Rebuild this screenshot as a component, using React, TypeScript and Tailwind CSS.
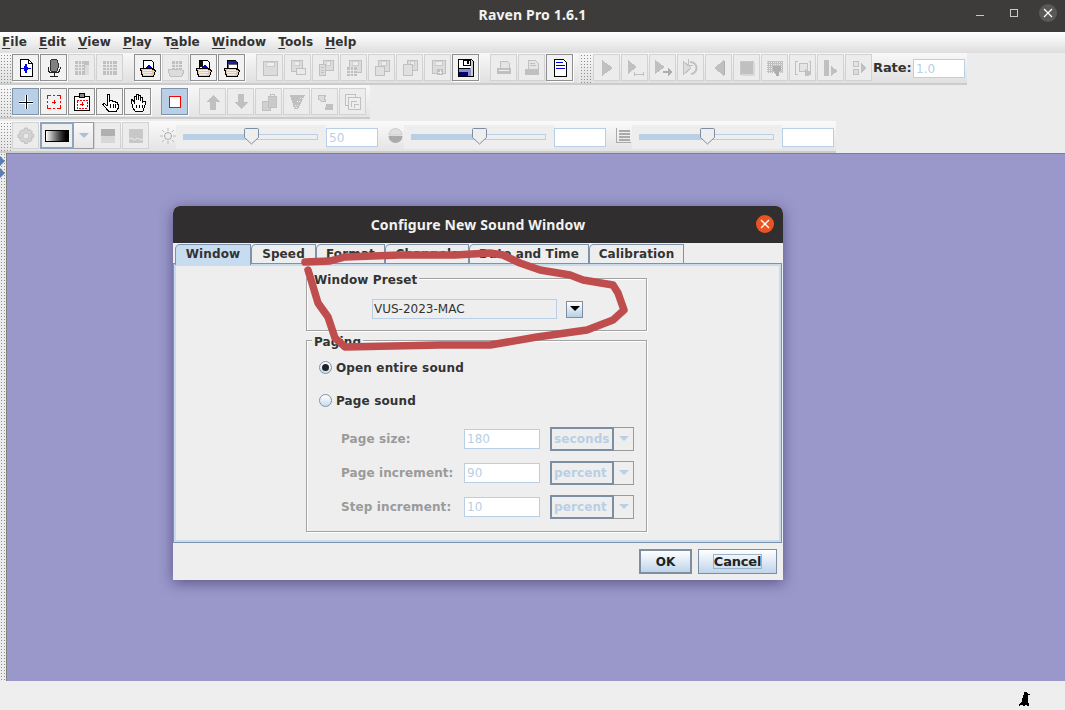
import React from "react";

const F = { fontFamily: '"DejaVu Sans", sans-serif' };
const G = "#c0c0c0";
const L = "#dcdcdc";

const Ic = ({ children, s = 20 }: { children: React.ReactNode; s?: number }) => (
  <svg width={s} height={s} viewBox="0 0 20 20" shapeRendering="crispEdges" className="block">
    {children}
  </svg>
);

const Floppy = ({ x = 4, y = 3, s = 12 }: { x?: number; y?: number; s?: number }) => (
  <g>
    <rect x={x + 0.5} y={y + 0.5} width={s} height={s} fill={L} stroke={G} />
    <rect x={x + 3} y={y + 1} width={s - 6} height={4} fill="#eee" stroke={G} strokeWidth="0.6" />
  </g>
);

const OpenDoc = ({ top, tri = true }: { top: string; tri?: boolean }) => (
  <g>
    <path d="M5.5 2.5h8l2 2v8h-10z" fill="#fff" stroke="#000" />
    {top === "black" && <rect x="6" y="3" width="3" height="6" fill="#111" />}
    {top === "blue" && <rect x="6" y="3" width="9" height="3" fill="#20209a" />}
    {tri && <path d="M7 11l4-5 4 5z" fill="#0000d8" />}
    {top === "blue" && <rect x="6" y="6" width="9" height="5" fill="#fff" stroke="#000" strokeWidth="0.6" />}
    <path d="M2.5 10.5h11l4 2-2 6h-11z" fill="#e8c8a8" stroke="#000" />
    <path d="M5 12h9M5 14h9M5 16h8" stroke="#f8efe4" />
  </g>
);

const icons: Record<string, React.ReactNode> = {
  sound: (
    <Ic>
      <path d="M4.5 1.500h8l4 4v13h-12z" fill="#fff" stroke="#000" />
      <path d="M12.500 1.500v4h4" fill="none" stroke="#000" />
      <path d="M5 10h3l1-3 1-2 1 2 1 3h3v1h-3l-1 3-1 2-1-2-1-3H5z" fill="#0000e0" />
    </Ic>
  ),
  mic: (
    <Ic>
      <rect x="6" y="1" width="8" height="13" rx="4" fill="#808080" stroke="#333" />
      <path d="M4 9v2c0 3 3 4 6 4s6-1 6-4V9M10 15v3M6 18.500h8" fill="none" stroke="#222" />
    </Ic>
  ),
  table: (
    <Ic>
      <rect x="3" y="3" width="14" height="14" fill={G} />
      <path d="M3 6.500h9M3 9.500h9M3 12.500h9M6.500 3v14M9.500 3v14" stroke="#e6e6e6" />
      <rect x="13" y="7" width="4" height="10" fill={L} />
    </Ic>
  ),
  grid: (
    <Ic>
      <rect x="3" y="3" width="14" height="14" fill={G} />
      <path d="M3 6.500h14M3 9.500h14M3 12.500h14M6.500 3v14M9.500 3v14M12.500 3v14" stroke="#e6e6e6" />
    </Ic>
  ),
  open1: <Ic><OpenDoc top="" /></Ic>,
  open2: <Ic><OpenDoc top="black" /></Ic>,
  open3: <Ic><OpenDoc top="blue" /></Ic>,
  openD: (
    <Ic>
      <rect x="6" y="3" width="10" height="9" fill={G} />
      <path d="M6 6.500h10M6 9.500h10M9.500 3v9M12.500 3v9" stroke="#e6e6e6" />
      <path d="M2 11h12l4 2-2 5H4z" fill={L} stroke={G} />
    </Ic>
  ),
  fl1: <Ic><Floppy x={3} y={3} s={14} /></Ic>,
  fl2: (
    <Ic>
      <Floppy x={3} y={2} s={11} />
      <rect x="8.500" y="10.500" width="9" height="6" fill="#eaeaea" stroke={G} />
    </Ic>
  ),
  fl3: (
    <Ic>
      <Floppy x={7} y={2} s={10} />
      <path d="M3.500 6.500h6v11h-6z" fill={L} stroke={G} />
      <path d="M5 9.500h3M5 12h3M5 14.500h3" stroke={G} />
    </Ic>
  ),
  fl4: (
    <Ic>
      <Floppy x={5} y={2} s={12} />
      <rect x="3" y="9" width="10" height="9" fill={G} />
      <path d="M3 12h10M3 15h10M6.500 9v9M9.500 9v9" stroke="#e6e6e6" />
    </Ic>
  ),
  fl5: (
    <Ic>
      <Floppy x={6} y={2} s={11} />
      <rect x="3.500" y="8.500" width="9" height="9" fill="#e0e0e0" stroke={G} />
    </Ic>
  ),
  fl6: (
    <Ic>
      <Floppy x={7} y={2} s={10} />
      <rect x="3.500" y="6.500" width="9" height="11" fill="#e0e0e0" stroke={G} />
    </Ic>
  ),
  fl7: (
    <Ic>
      <Floppy x={4} y={2} s={13} />
      <path d="M9 11h6v6H9z" fill={G} />
      <path d="M12 12v4M10 14h4" stroke="#eee" />
    </Ic>
  ),
  save: (
    <Ic>
      <path d="M2.500 1.500h13l2 2v15h-15z" fill="#fff" stroke="#000" />
      <rect x="3" y="10" width="12" height="8" fill="#8c8cc8" />
      <rect x="3" y="10" width="11" height="1" fill="#000" />
      <rect x="7" y="2" width="7" height="5" fill="#fff" stroke="#000" />
      <rect x="11" y="3" width="2" height="3" fill="#000" />
      <rect x="3" y="14" width="9" height="4" fill="#00007a" />
      <rect x="15" y="3" width="2" height="15" fill="#ccc" />
    </Ic>
  ),
  print: (
    <Ic>
      <path d="M6 3h7l2 2v5H6z" fill="#e4e4e4" stroke={G} />
      <rect x="3" y="10" width="14" height="6" fill={G} />
      <rect x="5" y="12" width="10" height="1" fill="#eee" />
    </Ic>
  ),
  printF: (
    <Ic>
      <path d="M6 2h7l3 3v6H6z" fill="#e4e4e4" stroke={G} />
      <path d="M8 5h5M8 7h6" stroke={G} />
      <rect x="3" y="11" width="14" height="6" fill={G} />
    </Ic>
  ),
  doc: (
    <Ic>
      <path d="M4.500 1.500h9l3 3v14h-12z" fill="#fff" stroke="#000" />
      <path d="M6 4h7M6 7h9M6 10h9" stroke="#0000e0" strokeWidth="1" />
    </Ic>
  ),
  play: (
    <Ic>
      <path d="M5 2l11 8-11 8z" fill={G} />
    </Ic>
  ),
  playB: (
    <Ic>
      <path d="M3 2l9 7-9 7z" fill={G} />
      <path d="M9.500 14v4M18.500 14v4M10 16h8" stroke={G} />
    </Ic>
  ),
  playA: (
    <Ic>
      <path d="M2 2l10 7-10 7z" fill={G} />
      <path d="M10 13h5v-3l4 4-4 4v-3h-5z" fill="#aeaeae" />
    </Ic>
  ),
  replay: (
    <Ic>
      <path d="M2 3l8 7-8 7z" fill={L} stroke={G} />
      <path d="M9 4a6 6 0 1 1 1 12" fill="none" stroke={G} strokeWidth="2" shapeRendering="auto" />
      <path d="M7 1v6h5" fill="none" stroke={G} />
    </Ic>
  ),
  rev: (
    <Ic>
      <path d="M15 2v16L5 10z" fill={G} />
      <rect x="15" y="3" width="1" height="14" fill="#aeaeae" />
    </Ic>
  ),
  stop: (
    <Ic>
      <rect x="3" y="3" width="13" height="13" fill={G} stroke="#c8c8c8" />
      <rect x="16" y="5" width="2" height="13" fill="#d8d8d8" />
      <rect x="5" y="16" width="13" height="2" fill="#d8d8d8" />
    </Ic>
  ),
  sel: (
    <Ic>
      <rect x="2" y="3" width="16" height="12" fill={G} />
      <path d="M2 4h16M2 6h16M2 8h16M2 10h16M2 12h16M2 14h16" stroke="#e8e8e8" strokeDasharray="1 1" />
      <path d="M8 8h8v5h-2v5h-3l-1-5H8z" fill="#aeaeae" />
    </Ic>
  ),
  selB: (
    <Ic>
      <path d="M4.500 3.500h-2v13h2M15.500 3.500h2v13h-2" fill="none" stroke={G} />
      <rect x="6.500" y="5.500" width="8" height="8" fill="#e4e4e4" stroke={G} strokeWidth="1.500" />
      <path d="M12 11l6 3-2 4h-4z" fill={G} />
    </Ic>
  ),
  step: (
    <Ic>
      <rect x="3" y="2" width="5" height="16" fill={G} />
      <path d="M10 8l7 5-7 5z" fill={G} />
    </Ic>
  ),
  stepM: (
    <Ic>
      <rect x="4.500" y="3.500" width="5" height="5" fill="#e4e4e4" stroke={G} />
      <rect x="4.500" y="11.500" width="5" height="5" fill={L} stroke={G} />
      <path d="M12 5l6 5-6 5z" fill={G} />
    </Ic>
  ),
  cross: (
    <Ic>
      <path d="M3 9h14v3H3zM9 3h3v14H9z" fill="#fff" />
      <path d="M3 10h14v1H3zM10 3h1v14h-1z" fill="#000" />
    </Ic>
  ),
  marq: (
    <Ic>
      <path d="M3.500 7V3.500H7M13 3.500h3.500V7M16.500 13v3.500H13M7 16.500H3.500V13" fill="none" stroke="#f00" strokeWidth="1.500" />
      <path d="M9 3.500h2M9 16.500h2M3.500 9v2M16.500 9v2" stroke="#f00" strokeWidth="1.500" />
      <path d="M10 8v4M8 10h4" stroke="#e00" />
    </Ic>
  ),
  clip: (
    <Ic>
      <rect x="2.500" y="4.500" width="15" height="14" fill="#fff" stroke="#000" />
      <rect x="7.500" y="1.500" width="5" height="4" fill="#888" stroke="#000" />
      <path d="M5 8h10v8H5z" fill="none" stroke="#e00" strokeDasharray="2 1" />
      <path d="M10 10v4M8 12h4" stroke="#e00" />
    </Ic>
  ),
  hand: (
    <Ic>
      <path d="M7 2.500h2v7l1-1h2l1 1h2l1 1h1l1 2v4l-2 3H9l-2-2-4-5 1-1 3 2z" fill="#fff" stroke="#000" />
      <path d="M10.500 12v4M13 12v4M15.500 12v4" stroke="#000" />
    </Ic>
  ),
  hand2: (
    <Ic>
      <path d="M3 8l1-1 2 3V4h2v4-6h2v6-5h2v6-4h2v6l1-2h2v4l-2 6H7l-2-3z" fill="#fff" stroke="#000" />
      <path d="M8 13v3M11 13v3M14 13v3" stroke="#000" />
    </Ic>
  ),
  redsq: (
    <Ic>
      <rect x="4.500" y="4.500" width="11" height="11" fill="#fff" stroke="#f00" />
    </Ic>
  ),
  up: (
    <Ic>
      <path d="M10 3l7 7h-4v8H7v-8H3z" fill={G} />
    </Ic>
  ),
  down: (
    <Ic>
      <path d="M7 2h6v8h4l-7 7-7-7h4z" fill={G} />
    </Ic>
  ),
  bag: (
    <Ic>
      <rect x="3" y="9" width="8" height="9" fill="#d0d0d0" stroke={G} />
      <rect x="9" y="4" width="8" height="11" fill="#cacaca" stroke={G} />
      <path d="M11 4V2h4v2" fill="none" stroke={G} />
    </Ic>
  ),
  fade: (
    <Ic>
      <path d="M3 3h15l-7 14H7z" fill={G} />
      <path d="M5 11h2M8 13h4M7 15h3M10 9h4M13 6h3" stroke="#eee" strokeDasharray="1 1" />
    </Ic>
  ),
  swap: (
    <Ic>
      <path d="M3 3h8l-2 3 2 3-3 1-5-3z" fill={L} stroke={G} />
      <path d="M10 18l1-6h7v6z" fill={G} />
    </Ic>
  ),
  win: (
    <Ic>
      <rect x="2.500" y="2.500" width="10" height="11" fill="#eee" stroke={G} />
      <rect x="5.500" y="5.500" width="12" height="12" fill="#eee" stroke={G} />
      <path d="M8 9h6M8 9v6M11 12h5M11 12v4" stroke={G} />
    </Ic>
  ),
  gear: (
    <Ic>
      <path
        d="M8.500 2h3l.5 2.500 2-1 2.200 2.200-1 2 2.500.5v3l-2.500.5 1 2-2.200 2.200-2-1-.5 2.500h-3l-.5-2.500-2 1-2.200-2.200 1-2L2 11.500v-3l2.500-.5-1-2L5.700 3.800l2 1z"
        fill="#d4d4d4"
        stroke={G}
        shapeRendering="auto"
      />
      <circle cx="10" cy="10" r="3" fill="#e8e8e8" stroke="#c8c8c8" shapeRendering="auto" />
    </Ic>
  ),
  grad: (
    <Ic>
      <rect x="3" y="3" width="14" height="7" fill="#b0b0b0" />
      <rect x="3" y="10" width="14" height="7" fill="#d8d8d8" />
    </Ic>
  ),
  wave: (
    <Ic>
      <rect x="3" y="3" width="14" height="14" fill="#c8c8c8" />
      <path d="M3 13q2-2 4 0t3 0 3 0 4 0" fill="none" stroke="#eee" shapeRendering="auto" />
    </Ic>
  ),
};

const Btn = ({ i, state = "off" }: { i: string; state?: "off" | "on" | "sel" }) => (
  <div
    className={
      "flex h-[27px] w-[27px] flex-none items-center justify-center border " +
      (state === "off"
        ? "border-[#d2d2d2] bg-[#ececec]"
        : state === "on"
          ? "border-[#8f8f8f] bg-[#f2f2f2] shadow-[1px_1px_0_#fff]"
          : "border-[#7f93ad] bg-[#b8cfe5] shadow-[1px_1px_0_#fff]")
    }
  >
    {icons[i]}
  </div>
);

const Grip = ({ w = "w-[12px]" }: { w?: string }) => (
  <div className={"h-full flex-none bg-[radial-gradient(#8d8d8d_0.7px,transparent_0.8px)] bg-[length:3px_3px] " + w} />
);

const Group = ({ ids, on = [], gap }: { ids: string[]; on?: string[]; gap?: string }) => (
  <div className={"flex gap-px " + (gap || "")}>
    {ids.map((id, n) => (
      <Btn key={id + n} i={id} state={on.includes(id) ? "on" : "off"} />
    ))}
  </div>
);

const Slider = () => (
  <div className="relative mt-[3px] flex h-[24px] w-[150px] flex-none items-center bg-[#eeeeee] px-[7px]">
    <div className="flex h-[6px] w-[135px] border border-[#b8cfe5] bg-[#eeeeee]">
      <div className="h-full w-[62px] bg-[#b8cfe5]" />
    </div>
    <svg width="15" height="17" viewBox="0 0 15 17" className="absolute left-[68px] top-[3px]">
      <path d="M1.500.5h12a1 1 0 0 1 1 1v8l-7 6.500-7-6.500v-8a1 1 0 0 1 1-1z" fill="#eeeeee" stroke="#7d8ea3" />
    </svg>
  </div>
);

const ValBox = ({ v = "" }: { v?: string }) => (
  <div className="mt-[6px] flex h-[19px] w-[52px] flex-none items-center border border-[#b8cfe5] bg-white pl-[2px] text-[12px] text-[#b8cfe5]">
    {v}
  </div>
);

const Menu = ({ k, rest }: { k: string; rest: string }) => (
  <span>
    <span className="underline underline-offset-2">{k}</span>
    {rest}
  </span>
);

const Etched = ({ title, cls, children }: { title: string; cls: string; children: React.ReactNode }) => (
  <div className={"relative ml-[130px] w-[341px] border border-[#a3a3a3] shadow-[1px_1px_0_#fff,inset_1px_1px_0_#fff] " + cls}>
    <span className="absolute -top-[6px] left-[5px] bg-[#eeeeee] px-[2px] text-[12px] font-bold leading-[15px] tracking-[0.12px] text-[#333]">{title}</span>
    {children}
  </div>
);

const Tab = ({ label, w, sel }: { label: string; w: string; sel?: boolean }) => (
  <div
    className={
      "flex flex-none items-center justify-center rounded-tl-[5px] border border-b-0 border-[#7d93ab] text-[12px] font-bold tracking-[0.12px] text-[#333] " +
      (sel ? "relative z-10 -mb-[2px] h-[21px] bg-[#c8dcf0] pb-[2px]" : "h-[19px] bg-[#eeeeee]") +
      " " +
      w
    }
  >
    {label}
  </div>
);

const Radio = ({ on }: { on?: boolean }) => (
  <span className="flex h-[13px] w-[13px] flex-none items-center justify-center rounded-full border border-[#7d93ab] bg-gradient-to-b from-white to-[#c8dcf0]">
    {on && <span className="h-[7px] w-[7px] rounded-full bg-[#222]" />}
  </span>
);

const PageRow = ({ label, val, unit }: { label: string; val: string; unit: string }) => (
  <div className="flex h-[24px] items-center">
    <span className="w-[123px] flex-none text-[12px] font-bold tracking-[0.1px] text-[#9a9a9a]">{label}</span>
    <div className="flex h-[20px] w-[76px] flex-none items-center border border-[#b8cfe5] bg-white pl-[2px] text-[12px] text-[#b8cfe5]">{val}</div>
    <div className="ml-[10px] flex h-[24px] w-[84px] flex-none">
      <div className="flex w-[64px] items-center border-2 border-[#7d8ea3] pl-[2px] text-[12px] font-bold tracking-[0.1px] text-[#b8cfe5]">{unit}</div>
      <div className="flex w-[20px] items-center justify-center border border-l-0 border-[#9a9a9a]">
        <svg width="10" height="6" viewBox="0 0 10 6"><path d="M0 0h10L5 5z" fill="#b8cfe5" /></svg>
      </div>
    </div>
  </div>
);

export default function App() {
  return (
    <div className="relative flex h-[710px] w-[1065px] flex-col overflow-hidden bg-[#ececec]" style={F}>
      {/* Window title */}
      <div className="relative flex h-[32px] flex-none items-center justify-center bg-[#3d3c3a] pb-[4px] text-[14px] font-bold tracking-[0.15px] text-[#f2f2f0]" style={{ fontFamily: '"Noto Sans", sans-serif' }}>
        Raven Pro 1.6.1
        <div className="absolute right-[8px] top-[4px] flex items-center">
          <div className="mr-[26px] h-px w-[8px] translate-y-[2px] bg-[#c8c8c8]" />
          <div className="mr-[21px] h-[8px] w-[8px] border border-[#c8c8c8]" />
          <div className="flex h-[18px] w-[18px] items-center justify-center rounded-full bg-[#5a5958]">
            <svg width="10" height="10" viewBox="0 0 10 10"><path d="M1 1l8 8M9 1l-8 8" stroke="#fff" strokeWidth="1.200" /></svg>
          </div>
        </div>
      </div>

      {/* Menu */}
      <div className="flex h-[21px] flex-none items-center gap-[12px] bg-gradient-to-b from-white to-[#dedede] pb-[1px] pl-[2px] text-[12px] font-bold tracking-[0.1px] text-[#333]">
        <Menu k="F" rest="ile" />
        <Menu k="E" rest="dit" />
        <Menu k="V" rest="iew" />
        <Menu k="P" rest="lay" />
        <span>T<span className="underline underline-offset-2">a</span>ble</span>
        <Menu k="W" rest="indow" />
        <Menu k="T" rest="ools" />
        <Menu k="H" rest="elp" />
      </div>

      {/* Toolbar 1 */}
      <div className="flex h-[32px] flex-none">
        <div className="flex h-full w-[967px] border-b-2 border-[#cccccc] bg-gradient-to-b from-[#f8f8f8] to-[#e0e0e0] pt-px">
          <Grip />
          <Group ids={["sound", "mic", "table", "grid"]} on={["sound", "mic"]} />
          <Group gap="ml-[11px]" ids={["open1", "openD", "open2", "open3"]} on={["open1", "open2", "open3"]} />
          <Group gap="ml-[11px]" ids={["fl1", "fl2", "fl3", "fl4", "fl5", "fl6", "fl7", "save"]} on={["save"]} />
          <Group gap="ml-[11px]" ids={["print", "printF", "doc"]} on={["doc"]} />
          <div className="ml-[6px] w-px bg-[#ececec]" />
          <Grip w="w-[13px]" />
          <Group ids={["play", "playB", "playA", "replay", "rev", "stop", "sel", "selB", "step", "stepM"]} />
          <div className="ml-px flex h-[28px] w-[40px] flex-none items-center text-[13px] font-bold tracking-[-0.1px] text-[#333]">Rate:</div>
          <div className="mt-[5px] flex h-[19px] w-[52px] items-center border border-[#b8cfe5] bg-white pl-[2px] text-[12px] text-[#b8cfe5]">1.0</div>
        </div>
      </div>

      {/* Toolbar 2 */}
      <div className="flex h-[34px] flex-none">
        <div className="flex h-[34px] w-[370px] border-b-2 border-[#cccccc] bg-gradient-to-b from-[#f8f8f8] to-[#e4e4e4] pt-[3px]">
          <Grip />
          <div className="flex gap-px">
            <Btn i="cross" state="sel" />
            <Btn i="marq" state="on" />
            <Btn i="clip" state="on" />
            <Btn i="hand" state="on" />
            <Btn i="hand2" state="on" />
          </div>
          <div className="ml-[10px]"><Btn i="redsq" state="sel" /></div>
          <Group gap="ml-[11px]" ids={["up", "down", "bag", "fade", "swap", "win"]} />
        </div>
      </div>

      {/* Toolbar 3 */}
      <div className="flex h-[34px] flex-none items-end">
        <div className="flex h-[32px] w-[836px] items-start border-b-2 border-[#cccccc] bg-gradient-to-b from-[#fafafa] to-[#e4e4e4] pt-px">
          <Grip />
          <Btn i="gear" />
          <div className="ml-px flex h-[27px] w-[54px] flex-none">
            <div className="flex w-[34px] items-center justify-center border-2 border-[#8fa4bb] bg-[#eeeeee]">
              <div className="h-[12px] w-[24px] border border-black bg-gradient-to-r from-white to-black" />
            </div>
            <div className="flex w-[20px] items-center justify-center border border-l-0 border-[#9a9a9a]">
              <svg width="10" height="6" viewBox="0 0 10 6"><path d="M0 0h10L5 5z" fill="#a8c0da" /></svg>
            </div>
          </div>
          <Btn i="grad" />
          <div className="ml-px"><Btn i="wave" /></div>
          <div className="ml-[11px] mt-[6px] w-[16px] flex-none">
            <svg width="16" height="16" viewBox="0 0 16 16">
              <circle cx="8" cy="8" r="3.500" fill="none" stroke="#aaa" />
              <path d="M8 0v3M8 13v3M0 8h3M13 8h3M2 2l2 2M12 12l2 2M2 14l2-2M12 4l2-2" stroke="#bbb" />
            </svg>
          </div>
          <Slider />
          <ValBox v="50" />
          <div className="ml-[10px] mt-[6px] w-[16px] flex-none">
            <svg width="15" height="15" viewBox="0 0 15 15">
              <path d="M1 7a6.500 6.500 0 0 1 13 0z" fill="#e0e0e0" stroke="#ccc" />
              <path d="M.500 8h14a7 7 0 0 1-14 0z" fill="#aaa" />
            </svg>
          </div>
          <Slider />
          <ValBox />
          <div className="ml-[10px] mt-[6px] w-[16px] flex-none">
            <svg width="15" height="15" viewBox="0 0 15 15" shapeRendering="crispEdges">
              <path d="M.500 0v14.500H15" fill="none" stroke="#aaa" />
              <path d="M3 3h11M3 6h11M3 9h11M3 12h11" stroke="#aaa" strokeWidth="1.500" />
            </svg>
          </div>
          <Slider />
          <ValBox />
        </div>
      </div>

      {/* Desktop */}
      <div className="flex min-h-0 flex-1">
        <div className="relative w-[6px] flex-none bg-[radial-gradient(#8d8d8d_0.7px,transparent_0.8px)] bg-[length:3px_3px]">
          <svg width="6" height="24" viewBox="0 0 6 24" className="absolute left-0 top-[3px]">
            <path d="M0 0l5 5-5 5zM0 12l5 5-5 5z" fill="#5b7fb5" />
          </svg>
        </div>
        <div className="relative flex-1 border-l border-t border-[#808080] bg-[#9a97cb]">
          {/* Dialog: a window on the desktop */}
          <div className="absolute left-[166px] top-[52px] flex h-[374px] w-[610px] flex-col rounded-t-[7px] bg-[#eeeeee] shadow-[0_3px_14px_rgba(40,35,80,0.55)]">
            <div className="relative flex h-[37px] flex-none items-center justify-center rounded-t-[7px] bg-[#302e2e] text-[14px] font-bold tracking-[0.15px] text-[#f2f2f0]" style={{ fontFamily: '"Noto Sans", sans-serif' }}>
              Configure New Sound Window
              <div className="absolute right-[9px] top-[9px] flex h-[18px] w-[18px] items-center justify-center rounded-full bg-[#e95420]">
                <svg width="10" height="10" viewBox="0 0 10 10"><path d="M1 1l8 8M9 1l-8 8" stroke="#fff" strokeWidth="1.300" /></svg>
              </div>
            </div>
            <div className="flex h-[20px] flex-none items-end pl-[2px]">
              <Tab label="Window" w="w-[76px]" sel />
              <Tab label="Speed" w="w-[65px]" />
              <Tab label="Format" w="w-[69px]" />
              <Tab label="Channels" w="w-[84px]" />
              <Tab label="Date and Time" w="w-[120px]" />
              <Tab label="Calibration" w="w-[95px]" />
            </div>
            <div className="mr-px h-[280px] flex-none border border-[#7d93ab] bg-[#eeeeee]">
              <div className="h-full border-2 border-[#c8dcf0]">
                <Etched title="Window Preset" cls="mt-[12px] h-[53px]">
                  <div className="ml-[65px] mt-[20px] flex h-[20px] items-center">
                    <div className="flex h-[20px] w-[185px] flex-none items-center border border-[#b8cfe5] pl-px text-[12px] text-[#333]">VUS-2023-MAC</div>
                    <div className="ml-[9px] flex h-[17px] w-[17px] flex-none items-center justify-center border border-[#7d8ea3] bg-gradient-to-b from-white to-[#b8cfe5]">
                      <svg width="10" height="6" viewBox="0 0 10 6"><path d="M0 0h10L5 5z" fill="#000" /></svg>
                    </div>
                  </div>
                </Etched>
                <Etched title="Paging" cls="mt-[9px] h-[192px]">
                  <div className="ml-[12px] mt-[19px] flex h-[15px] items-center gap-[4px] text-[12px] font-bold tracking-[0.14px] text-[#333]"><Radio on />Open entire sound</div>
                  <div className="ml-[12px] mt-[18px] flex h-[15px] items-center gap-[4px] text-[12px] font-bold tracking-[0.14px] text-[#333]"><Radio />Page sound</div>
                  <div className="ml-[34px] mt-[19px] flex flex-col gap-[10px]">
                    <PageRow label="Page size:" val="180" unit="seconds" />
                    <PageRow label="Page increment:" val="90" unit="percent" />
                    <PageRow label="Step increment:" val="10" unit="percent" />
                  </div>
                </Etched>
              </div>
            </div>
            <div className="flex flex-1 items-center justify-end gap-[6px] pr-[6px]">
              <div className="flex h-[25px] w-[53px] items-center justify-center border-2 border-[#7d8ea3] bg-gradient-to-b from-white to-[#c0d4ea] text-[12px] font-bold text-[#222]">OK</div>
              <div className="flex h-[25px] w-[79px] items-center justify-center border border-[#7d8ea3] bg-gradient-to-b from-white to-[#c0d4ea] text-[13px] font-bold tracking-[-0.2px] text-[#222]">
                <span className="border border-[#9fb3c9] leading-[13px]">Cancel</span>
              </div>
            </div>
          </div>
        </div>
      </div>

      {/* Status bar */}
      <div className="relative h-[29px] flex-none bg-[#eeeeee]">
        <svg width="12" height="14" viewBox="0 0 12 14" shapeRendering="crispEdges" className="absolute left-[1019px] top-[11px]">
          <path d="M5 0h3v1h1v1h2v1H9v8h1v3H8v-1H6v1H4v-1H1v1H0v-2h1v-1h1v-1h1V6h1V3h1z" fill="#000" />
        </svg>
      </div>

      {/* Hand-drawn annotation over the screenshot */}
      <svg width="1065" height="710" viewBox="0 0 1065 710" className="pointer-events-none absolute left-0 top-0">
        <path
          d="M305 262L330 261L345 257L400 255L455 255L490 253L503 255L520 263L540 270L570 275L583 280L613 285L618 293L624 310L613 320L587 330L537 337L490 345L440 345L345 347L335 338L328 317L318 303L312 283L308 270"
          fill="none"
          stroke="#c04d4d"
          strokeWidth="7.500"
          strokeLinejoin="round"
          strokeLinecap="round"
        />
      </svg>
    </div>
  );
}
